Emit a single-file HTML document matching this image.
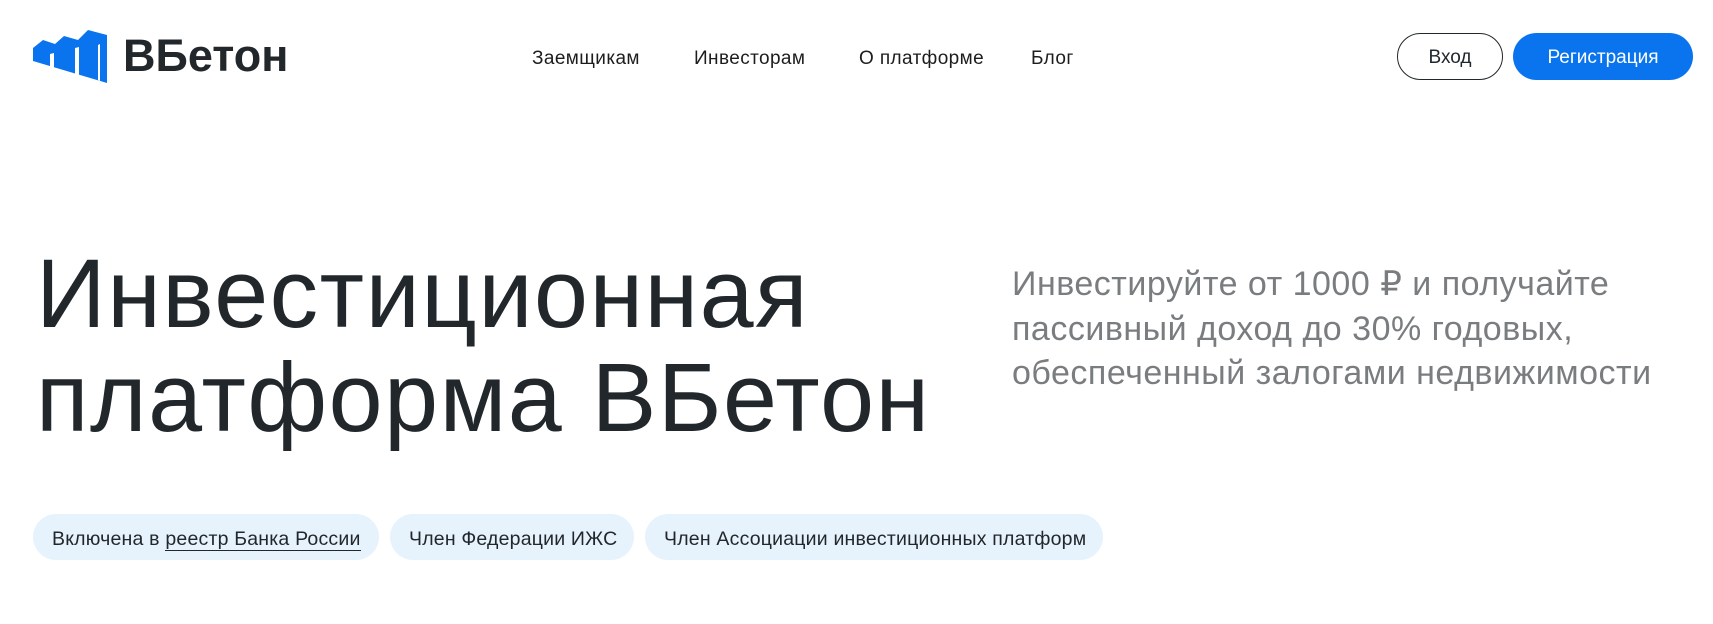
<!DOCTYPE html>
<html><head><meta charset="utf-8"><style>
*{margin:0;padding:0;box-sizing:border-box}
body{width:1713px;height:624px;background:#fff;font-family:"Liberation Sans",sans-serif;color:#22272b;position:relative;overflow:hidden}
.abs{position:absolute;white-space:nowrap}
.nav{font-size:19px;letter-spacing:0.4px;top:48px;color:#1d1d1d}
.btn{position:absolute;top:33px;height:47px;border-radius:24px;font-size:19px;display:flex;align-items:center;justify-content:center;padding-top:3px}
h1{position:absolute;left:36px;top:242px;font-size:97px;line-height:104px;font-weight:400;letter-spacing:1.5px;color:#22272b;white-space:nowrap}
.p{position:absolute;left:1012px;top:262px;font-size:34px;line-height:44.5px;color:#7a7d80;white-space:nowrap;letter-spacing:0.5px}
.pill{position:absolute;top:514px;height:46px;border-radius:23px;background:#e6f3fd;font-size:19.5px;letter-spacing:0.2px;display:flex;align-items:center;padding-left:19px;padding-top:5px;color:#22272b;white-space:nowrap}
</style></head><body>
<svg class="abs" style="left:28px;top:25px" width="85" height="62" viewBox="0 0 85 62">
<path d="M5,23 L15,15 L27,19 L36,11 L50,15 L60,5 L79,10 L79,58 L5,36 Z" fill="#0a74ef"/>
<path d="M22,29 L26,28 L26,45 L22,44 Z" fill="#fff"/>
<path d="M47,23 L51,22 L51,51 L47,50 Z" fill="#fff"/>
<path d="M70,20 L72,19 L72,56 L70,55 Z" fill="#fff"/>
</svg>
<div class="abs" style="left:123px;top:30px;font-size:45px;font-weight:700;letter-spacing:0px;color:#22272b">ВБетон</div>
<div class="abs nav" style="left:532px">Заемщикам</div>
<div class="abs nav" style="left:694px">Инвесторам</div>
<div class="abs nav" style="left:859px">О платформе</div>
<div class="abs nav" style="left:1031px">Блог</div>
<div class="btn" style="left:1397px;width:106px;border:1px solid #22272b;color:#22272b">Вход</div>
<div class="btn" style="left:1513px;width:180px;background:#0a74ef;color:#fff">Регистрация</div>
<h1>Инвестиционная<br>платформа ВБетон</h1>
<div class="p">Инвестируйте от 1000 ₽ и получайте<br>пассивный доход до 30% годовых,<br>обеспеченный залогами недвижимости</div>
<div class="pill" style="left:33px;width:346px">Включена в&nbsp;<span style="border-bottom:1px solid #22272b;line-height:21px">реестр Банка России</span></div>
<div class="pill" style="left:390px;width:244px">Член Федерации ИЖС</div>
<div class="pill" style="left:645px;width:458px">Член Ассоциации инвестиционных платформ</div>
</body></html>
